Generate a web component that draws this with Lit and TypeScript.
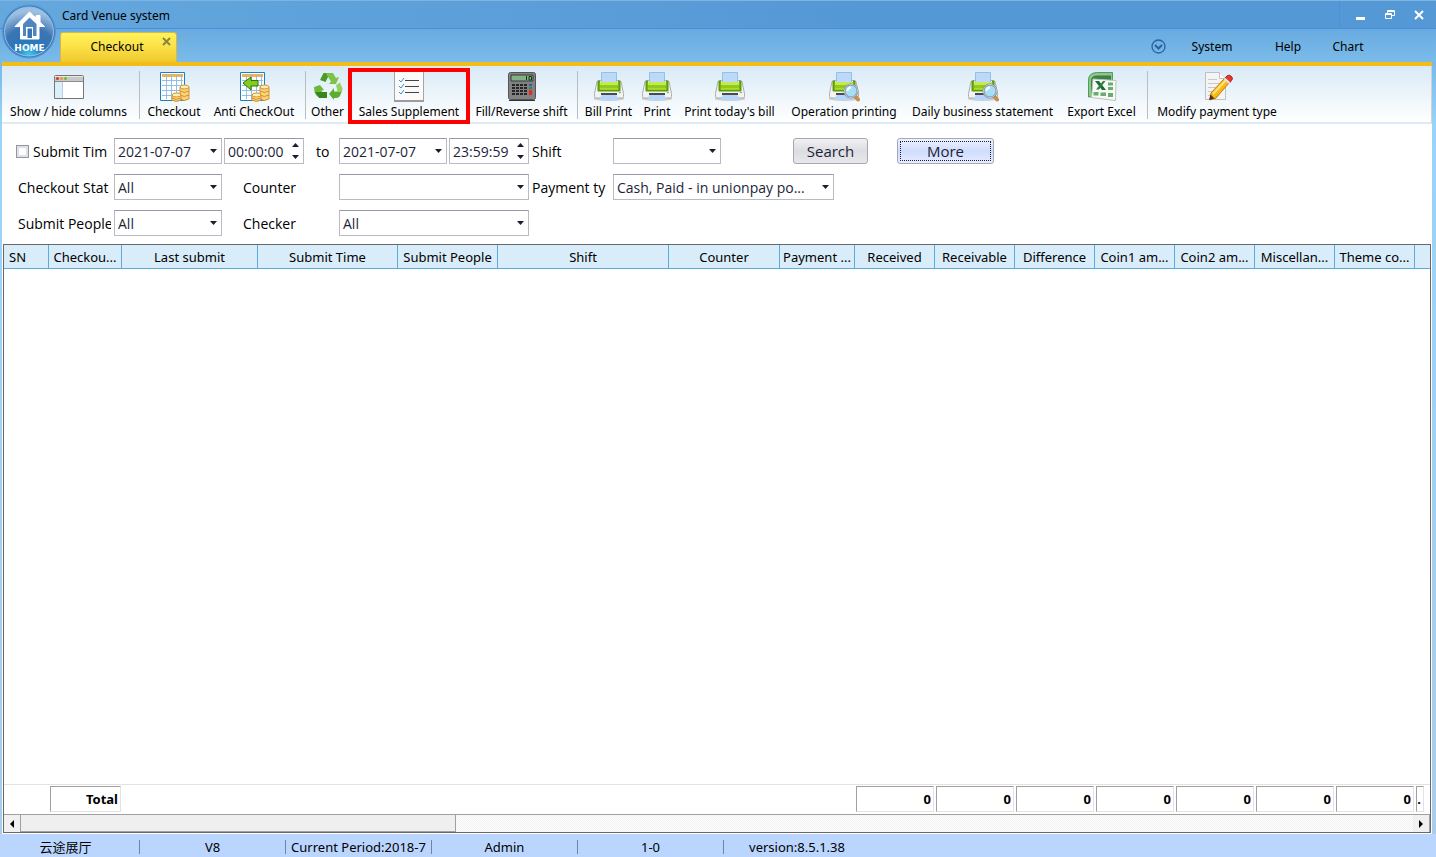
import { LitElement, html, css, svg } from "lit";
import { customElement } from "lit/decorators.js";

const printer = svg`
  <path d="M1 27.500q15 3 30 0" stroke="#cfcfcf" stroke-width="2" fill="none"/>
  <path d="M4 10.500q1-1 3-1h18q2 0 3 1l2.500 12v3q0 1.500-1.500 1.500H3q-1.500 0-1.500-1.500v-3z" fill="#f3f3f3" stroke="#adadad"/>
  <path d="M8.500 1.500h15v10h-15z" fill="#bcdaf8" stroke="#93bfec"/>
  <path d="M4.500 10.500q0-1 1-1h1.500v8h18v-8h1.500q1 0 1 1v9q0 1-1 1h-21q-1 0-1-1z" fill="#5d9c0c"/>
  <path d="M6.500 11h19v8h-19z" fill="#8fca1d"/>
  <path d="M7 11h18v3H7z" fill="#c5ea4e"/>
  <path d="M7 17h18v1.500H7z" fill="#a8dc2f"/>
  <path d="M8 22h16v2H8z" fill="#4b4b4b"/>
  <path d="M8.500 24h15l2 5h-19z" fill="#b5d6fa"/>
  <circle cx="27" cy="21.500" r=".8" fill="#4aa02a"/>`;

const lens = svg`
  <path d="M27 25l3 3.500" stroke="#c98f48" stroke-width="4" stroke-linecap="round"/>
  <circle cx="23" cy="20" r="6.500" fill="#a5def9" stroke="#7d868e" stroke-width="2"/>
  <circle cx="23" cy="20" r="6.500" fill="none" stroke="#d7dde2" stroke-width=".8"/>
  <path d="M19.500 20q0-3.500 3.500-3.500" stroke="#fff" stroke-width="2" fill="none"/>`;

const sheet = svg`
  <path d="M2.500 1.500h24v28h-24z" fill="#fff" stroke="#1f7fc0"/>
  <path d="M4 3h21v3H4z" fill="#f7b04c"/>
  <path d="M4 9.500h21M4 14.500h21M4 19.500h21M4 24.500h21M8.500 3v25M13.500 3v25M18.500 3v25M23.500 3v25" stroke="#8fbfe2"/>`;

const coins = svg`
  <path d="M22 16v12q4 3 9 0V16z" fill="#fbd274" stroke="#d09335"/>
  <ellipse cx="26.500" cy="16" rx="4.500" ry="2" fill="#ffedb5" stroke="#d09335"/>
  <path d="M22 20q4 3 9 0M22 24q4 3 9 0" fill="none" stroke="#d09335"/>
  <path d="M14 24v5q4 3 9 0v-5z" fill="#fbd274" stroke="#d09335"/>
  <ellipse cx="18.500" cy="24" rx="4.500" ry="2" fill="#ffedb5" stroke="#d09335"/>
  <path d="M14 27q4 3 9 0" fill="none" stroke="#d09335"/>`;

const icons: Record<string, unknown> = {
  columns: svg`
    <path d="M1.500 5.500q0-1 1-1h27q1 0 1 1v22h-29z" fill="#fff" stroke="#777"/>
    <path d="M2 5h28v5H2z" fill="#c8c8c8"/><path d="M2 5.500h28" stroke="#e6e6e6"/><path d="M2 10.500h28" stroke="#8c8c8c"/>
    <path d="M2 11h7v16H2z" fill="#d9effc"/><path d="M9.500 11v16" stroke="#b9cfdd"/>
    <circle cx="4.500" cy="7.500" r="1.500" fill="#d8303a"/><circle cx="8.500" cy="7.500" r="1.500" fill="#ee9a28"/><circle cx="12.500" cy="7.500" r="1.500" fill="#79b82a"/>`,
  checkout: svg`${sheet}${coins}`,
  anti: svg`${sheet}<path d="M5 12l8-6v3.500h7v5.500h-7v4z" fill="#86c91f" stroke="#2f7707"/>${coins}`,
  recycle: svg`
    <path d="M8 9l3.500-7H20l-3.500 3-3 6z" fill="#4c9a2b"/><path d="M14 2h7l3 5 3-1-3 7h-7l2-2.500-4-6z" fill="#7fc248"/>
    <path d="M2 16l6-2 4 5-2.500.5 3 6.500H8q-4 0-5.500-5z" fill="#6fb93a"/><path d="M3 21l4 6h8v-6H8z" fill="#37871f"/>
    <path d="M17 23l5-6v3.500h6l2-1-2 5.500q-1 2-4 2h-2v2z" fill="#5cae30"/><path d="M24 14l4-2.500 2.500 6q.5 2-2 3.500l-3-.5z" fill="#92d25e"/>`,
  supplement: svg`
    <path d="M1.500 .5h29v29h-29z" fill="#fafafa" stroke="#a5a5a5"/><path d="M1 30h30" stroke="#9c9c9c" stroke-width="2"/>
    <path d="M12 9.500h14M12 15.500h14M12 21.500h14" stroke="#444"/>
    <path d="M6 9l2 2 3-4M6 15l2 2 3-4M6 21l2 2 3-4" fill="none" stroke="#3b92d4"/>`,
  calculator: svg`
    <rect x="2.500" y="1.500" width="27" height="27" rx="2" fill="#828282" stroke="#555"/>
    <path d="M5 4h22v6H5z" fill="#82b188" stroke="#3b3b3b"/><path d="M20.500 5v4M23 5.500h2.500v3.500H23z" stroke="#173519" fill="none"/>
    <path d="M6 14h15M6 17h15M6 20h15M6 23h15" stroke="#262626" stroke-width="2" stroke-dasharray="3 1"/>
    <path d="M23 13h3v2h-3z" fill="#3b50c4"/><path d="M23 16h3v2h-3z" fill="#2f8b31"/><path d="M23 19h3v5h-3z" fill="#df2b24"/>
    <path d="M3 29.500h26" stroke="#333"/>`,
  printer,
  search: svg`${printer}${lens}`,
  excel: svg`
    <path d="M2.500 26V9q0-7 8-7.500h16V24z" fill="#8ec78d" stroke="#4f9d57"/>
    <path d="M5 24V10q0-5.500 6-5.500h14V10H9v14z" fill="#3f8049"/>
    <path d="M7 8l23 1.500L29.500 29.500 5.500 26.500z" fill="#f8faf5" stroke="#b9c7b5"/>
    <path d="M9 10h4l7 9h-4z" fill="#1f6b36"/><path d="M17 10h2.500L13 18.500h-3z" fill="#2f7f45"/>
    <path d="M22 11.500h5v3h-5zM22 16h5v3h-5zM7.500 21h5v3.500h-5zM14.500 21.500h5.500v3.500h-5.500zM22 22h5v4h-5z" fill="#69ab70"/>`,
  pencil: svg`
    <path d="M4.500 1.500h14l6 6v21h-20z" fill="#f4f4f4" stroke="#c0c0c0"/><path d="M18.500 1.500v6h6" fill="#fff" stroke="#c0c0c0"/>
    <path d="M7 8.500h9M7 12.500h13M7 16.500h10M7 20.500h6M7 24.500h4" stroke="#c9c9c9"/>
    <path d="M10 22L23 8l5 4-13 15-6 2z" fill="#f8ba16" stroke="#c07c10"/><path d="M12 23L24.500 9.500" stroke="#ffe27a" stroke-width="2"/>
    <path d="M24 7l2.500-2.500q2-1 4 1t0 4L28.500 12z" fill="#e23a2e" stroke="#b01f18"/><path d="M23.500 7.500l5 4.500" stroke="#e9e9e9" stroke-width="2"/>
    <path d="M9.500 23.500l4 4-5.500 1.500z" fill="#55301a"/>`,
};

interface Tool { label: string; icon: string; width: number; marked?: boolean }

const toolGroups: Tool[][] = [
  [{ label: "Show / hide columns", icon: "columns", width: 133 }],
  [
    { label: "Checkout", icon: "checkout", width: 66 },
    { label: "Anti CheckOut", icon: "anti", width: 94 },
  ],
  [
    { label: "Other", icon: "recycle", width: 41 },
    { label: "Sales Supplement", icon: "supplement", width: 122, marked: true },
    { label: "Fill/Reverse shift", icon: "calculator", width: 103 },
  ],
  [
    { label: "Bill Print", icon: "printer", width: 59 },
    { label: "Print", icon: "printer", width: 38 },
    { label: "Print today's bill", icon: "printer", width: 107 },
    { label: "Operation printing", icon: "search", width: 122 },
    { label: "Daily business statement", icon: "search", width: 155 },
    { label: "Export Excel", icon: "excel", width: 83 },
  ],
  [{ label: "Modify payment type", icon: "pencil", width: 136 }],
];

const columns: { label: string; width?: number; total?: string }[] = [
  { label: "SN", width: 45 },
  { label: "Checkou...", width: 73, total: "Total" },
  { label: "Last submit", width: 136 },
  { label: "Submit Time", width: 140 },
  { label: "Submit People", width: 100 },
  { label: "Shift", width: 171 },
  { label: "Counter", width: 111 },
  { label: "Payment ...", width: 75 },
  { label: "Received", width: 80, total: "0" },
  { label: "Receivable", width: 80, total: "0" },
  { label: "Difference", width: 80, total: "0" },
  { label: "Coin1 am...", width: 80, total: "0" },
  { label: "Coin2 am...", width: 80, total: "0" },
  { label: "Miscellan...", width: 80, total: "0" },
  { label: "Theme co...", width: 80, total: "0" },
  { label: "", total: "." },
];

@customElement("app-root")
export class AppRoot extends LitElement {
  static styles = css`
    :host {
      display: flex;
      flex-direction: column;
      height: 100vh;
      box-sizing: border-box;
      overflow: hidden;
      position: relative;
      background: linear-gradient(#5a9ad8 0, #5a9ad8 28px, #78b8e8 62px, #9bd3f8 124px, #a9cdec 100%);
      font-family: "Noto Sans", "Noto Sans CJK SC", sans-serif;
      font-size: 13px;
      color: #000;
    }
    * { box-sizing: border-box; }
    button, input, select { font: inherit; color: inherit; margin: 0; padding: 0; border: 0; background: none; border-radius: 0; }
    .titlebar {
      display: flex; height: 29px; align-items: center; padding-left: 62px; flex: none; font-size: 12px;
      border-top: 1px solid #7db4e2; border-bottom: 1px solid #4590dc;
      background: linear-gradient(90deg, #64a8de, #5598d6 60%);
    }
    .title { flex: 1; font-weight: 400; font-size: 12px; margin: 0; padding-top: 2px; }
    .window-buttons { display: flex; height: 28px; padding: 0 3px 0 6px; border-left: 1px solid #4a90da; }
    .window-buttons button { width: 29px; display: grid; place-items: center; }
    .tabs {
      display: flex; height: 33px; flex: none; align-items: flex-end; padding-left: 60px; padding-right: 58px; font-size: 12px;
      background: linear-gradient(#69abe0, #7bbbea);
    }
    .tab {
      display: flex; width: 117px; height: 30px; border-radius: 3px 3px 0 0; border: 1px solid #d3b74a; border-bottom: 0;
      background: linear-gradient(#fff35a, #fbe248 45%, #efc92e); position: relative;
    }
    .tab-label { width: 112px; text-align: center; font-size: 12px; padding-bottom: 2px; }
    .tab-close { position: absolute; top: 3px; right: 4px; display: grid; place-items: center; width: 12px; height: 11px; }
    .menu { display: flex; flex: 1; align-items: center; justify-content: flex-end; height: 32px; }
    .menu button { display: grid; padding-top: 1px; }
    .menu a { color: #000; text-decoration: none; width: 60px; text-align: center; }
    .menu a.first { width: 92px; }
    .home { position: absolute; left: 1px; top: 4px; width: 56px; height: 56px; }
    .home svg { display: block; }
    .frame { display: flex; flex-direction: column; flex: 1; min-height: 0; margin: 0 4px 0 2px; background: #fff; border-top: 4px solid #f2bd16; }
    .toolbar {
      display: flex; flex: none; height: 58px; border-bottom: 2px solid #deebf6; background: linear-gradient(#d9eaf6, #fff);
      border-right: 1px solid #cdd3d8; font-size: 12px;
    }
    .group { display: flex; padding-right: 4px; }
    .group + .group { border-left: 1px solid #b9bec3; padding-left: 1px; margin: 5px 0 3px; }
    .group + .group .tool { margin-top: -5px; }
    .tool { display: flex; flex-direction: column; align-items: center; height: 58px; padding-top: 5px; white-space: nowrap; line-height: 18px; }
    .tool svg { display: block; flex: none; }
    .group .tool.marked { outline: 4px solid #f00; outline-offset: -4px; margin-top: -3px; padding-top: 3px; height: 56px; }
    .filters { display: flex; flex-direction: column; gap: 10px; padding: 14px 0 8px 14px; font-family: "Open Sans", "Noto Sans", sans-serif; font-size: 15px; flex: none; }
    .row { display: flex; align-items: center; height: 26px; }
    .label { flex: none; display: flex; align-items: center; white-space: nowrap; overflow: hidden; height: 24px; font-size: 14px; }
    .l-first { width: 95px; margin-right: 3px; padding-left: 2px; }
    .l-first.tick { padding-left: 0; width: 95px; margin-right: 3px; gap: 4px; }
    .l-mid { width: 117px; padding-left: 21px; }
    .l-to { width: 35px; padding-left: 12px; }
    .l-third { width: 78px; padding-left: 3px; margin-right: 6px; }
    .check { appearance: none; flex: none; width: 13px; height: 13px; border: 1px solid #9496a3; background: #fff; box-shadow: inset 0 0 0 2px #dfe1e8; }
    .combo {
      appearance: none; flex: none; height: 26px; width: 108px; border: 1px solid #b9bac4; border-top-color: #9899a8; padding: 0 16px 0 3px; color: #1e1e39;
      background: #fff url('data:image/svg+xml,<svg xmlns="http://www.w3.org/2000/svg" width="7" height="4"><path d="M0 0h7L3.500 4z" fill="%231c1c30"/></svg>') no-repeat right 4px center;
      white-space: nowrap; font-size: 14px;
    }
    .combo.wide { width: 190px; }
    .combo.pay { width: 221px; }
    .spin { display: flex; width: 80px; height: 26px; margin-left: 2px; border: 1px solid #b9bac4; border-top-color: #9899a8; color: #1e1e39; font-size: 14px; }
    .spin input { flex: 1; min-width: 0; padding-left: 3px; }
    .arrows { display: flex; flex-direction: column; width: 16px; }
    .arrows button { flex: 1; display: grid; place-items: center; }
    .btn {
      width: 75px; height: 26px; margin-left: 72px; border: 1px solid #a5a7b3; border-radius: 3px; color: #1e1e39; padding-bottom: 1px;
      background: linear-gradient(#f1f1f3, #dcdde1 50%, #e8e8ec);
    }
    .btn.more { width: 97px; margin-left: 29px; background: linear-gradient(#eef2ff, #cfdcfc 50%, #e6edff); outline: 1px dotted #1e1e39; outline-offset: -4px; }
    .grid { display: flex; flex-direction: column; flex: 1; min-height: 0; margin: 0 1px 1px; border: 1px solid #696969; }
    .body { flex: 1; min-height: 0; }
    table { width: 100%; height: 100%; table-layout: fixed; border-collapse: separate; border-spacing: 0; }
    th {
      height: 24px; padding: 0 2px; font-weight: 400; font-size: 13px; line-height: 20px; background: #d9ecf9; white-space: nowrap; overflow: hidden;
      border-right: 1px solid #5cabda; border-bottom: 1px solid #5cabda;
    }
    th:first-child { text-align: left; padding-left: 5px; }
    th:last-child { border-right: 0; }
    tbody td { padding: 0; }
    tfoot td { height: 30px; border-top: 1px solid #e3e3e3; padding: 1px 1px 2px; vertical-align: top; }
    tfoot td:last-child { padding-right: 6px; }
    .total {
      height: 26px; font-weight: 700; font-size: 13px; line-height: 24px; text-align: right; padding-right: 2px; overflow: hidden;
      border: 1px solid #a0a0a0; border-right: 1px solid #e3e3e3; border-bottom: 1px solid #e3e3e3;
    }
    .scroll {
      display: flex; flex: none; height: 18px; border-top: 1px solid #a0a0a0;
      background: repeating-conic-gradient(#f0f0f0 0 25%, #fff 0 50%) 0 0 / 2px 2px;
    }
    .scroll button { width: 17px; display: grid; place-items: center; background: #f0f0f0; border-right: 1px solid #a0a0a0; }
    .thumb { width: 30.5%; background: #efefef; border-right: 1px solid #a0a0a0; border-bottom: 1px solid #a0a0a0; }
    .space { flex: 1; }
    .status { display: flex; flex: none; align-items: center; height: 23px; background: #bad6ff; font-size: 13px; padding-top: 2px; }
    .status span { width: 146px; text-align: center; border-right: 1px solid #7384a3; line-height: 14px; white-space: nowrap; }
    .status span:first-child { width: 140px; padding-right: 8px; }
    .status span:last-child { border: 0; }
  `;

  private combo(label: string, value: string, kind = "") {
    return html`<select class="combo ${kind}" aria-label=${label}><option>${value}</option></select>`;
  }

  private spinner(label: string, value: string) {
    return html`<div class="spin">
      <input type="text" aria-label=${label} .value=${value} />
      <div class="arrows">
        <button aria-label="Increase"><svg width="7" height="4"><path d="M0 4h7L3.500 0z" fill="#1c1c30" /></svg></button>
        <button aria-label="Decrease"><svg width="7" height="4"><path d="M0 0h7L3.500 4z" fill="#1c1c30" /></svg></button>
      </div>
    </div>`;
  }

  render() {
    return html`
      <header class="titlebar">
        <h1 class="title">Card Venue system</h1>
        <div class="window-buttons">
          <button aria-label="Minimize"><svg width="10" height="10"><path d="M0 7h9v3H0z" fill="#fff" /></svg></button>
          <button aria-label="Restore"><svg width="10" height="10" fill="none" stroke="#fff"><path d="M2.500 3V.5h7v5H7M2 1.500h8M.5 3.500h6v5h-6zM0 4.500h7" /></svg></button>
          <button aria-label="Close window"><svg width="10" height="10"><path d="M1 1l8 8M9 1L1 9" stroke="#fff" stroke-width="2" /></svg></button>
        </div>
      </header>
      <nav class="tabs">
        <div class="tab">
          <button class="tab-label">Checkout</button>
          <button class="tab-close" aria-label="Close tab"><svg width="9" height="9"><path d="M1 1l7 7M8 1L1 8" stroke="#8d8340" stroke-width="2" /></svg></button>
        </div>
        <div class="menu">
          <button aria-label="Options"><svg width="15" height="15" fill="none" stroke="#29619f"><circle cx="7.500" cy="7.500" r="6.500" stroke-width="1.300" /><path d="M4 6l3.500 3.500L11 6" stroke-width="2" /></svg></button>
          <a href="#system" class="first">System</a>
          <a href="#help">Help</a>
          <a href="#chart">Chart</a>
        </div>
      </nav>
      <button class="home" aria-label="Home">
        <svg width="56" height="56" viewBox="0 0 56 56">
          <defs>
            <radialGradient id="orb" cx=".5" cy="1" r=".9"><stop offset="0" stop-color="#3fd0f4" /><stop offset=".3" stop-color="#2879bb" /><stop offset=".65" stop-color="#3c74b3" /><stop offset="1" stop-color="#9dc0e2" /></radialGradient>
          </defs>
          <circle cx="28" cy="27.500" r="26.500" fill="#3f7fbd" stroke="#5c97cf" />
          <circle cx="28" cy="27.500" r="24.500" fill="url(#orb)" stroke="#8fc1e8" />
          <path d="M28.500 8L14 22.500h5.500V35H38V22.500h5.500L39 18v-6.500h-4V14z" fill="#fff" stroke="#fff" stroke-linejoin="round" />
          <path d="M28.500 13.500L22 20v12h3v-9h7v9h3.500V20z" fill="#4f86bf" />
          <path d="M26.500 24.500h4.500V34h-4.500z" fill="#3c74b3" />
          <text x="28.500" y="46.500" text-anchor="middle" font-size="9" font-weight="700" fill="#fff" font-family="DejaVu Sans, sans-serif">HOME</text>
        </svg>
      </button>
      <main class="frame">
        <div class="toolbar">
          ${toolGroups.map((group) => html`<div class="group">
            ${group.map((t) => html`<button class="tool ${t.marked ? "marked" : ""}" style="width:${t.width}px">
              <svg width="32" height="32" viewBox="0 0 32 32">${icons[t.icon]}</svg>${t.label}
            </button>`)}
          </div>`)}
        </div>
        <div class="filters">
          <div class="row">
            <label class="label l-first tick"><input class="check" type="checkbox" />Submit Tim</label>
            ${this.combo("Start date", "2021-07-07")}${this.spinner("Start time", "00:00:00")}
            <span class="label l-to">to</span>
            ${this.combo("End date", "2021-07-07")}${this.spinner("End time", "23:59:59")}
            <span class="label l-third">Shift</span>${this.combo("Shift", "")}
            <button class="btn">Search</button><button class="btn more">More</button>
          </div>
          <div class="row">
            <span class="label l-first">Checkout Stat</span>${this.combo("Checkout State", "All")}
            <span class="label l-mid">Counter</span>${this.combo("Counter", "", "wide")}
            <span class="label l-third">Payment ty</span>${this.combo("Payment type", "Cash, Paid - in unionpay po...", "pay")}
          </div>
          <div class="row">
            <span class="label l-first">Submit People</span>${this.combo("Submit People", "All")}
            <span class="label l-mid">Checker</span>${this.combo("Checker", "All", "wide")}
          </div>
        </div>
        <section class="grid">
          <div class="body">
            <table>
              <colgroup>${columns.map((c) => html`<col style=${c.width ? `width:${c.width}px` : ""} />`)}</colgroup>
              <thead><tr>${columns.map((c) => html`<th>${c.label}</th>`)}</tr></thead>
              <tbody><tr><td colspan="16"></td></tr></tbody>
              <tfoot><tr>${columns.map((c) => html`<td>${c.total ? html`<div class="total">${c.total}</div>` : ""}</td>`)}</tr></tfoot>
            </table>
          </div>
          <div class="scroll">
            <button aria-label="Scroll left"><svg width="4" height="8"><path d="M4 0v8L0 4z" /></svg></button>
            <div class="thumb"></div><div class="space"></div>
            <button aria-label="Scroll right"><svg width="4" height="8"><path d="M0 0v8l4-4z" /></svg></button>
          </div>
        </section>
      </main>
      <footer class="status">
        <span>云途展厅</span><span>V8</span><span>Current Period:2018-7</span><span>Admin</span><span>1-0</span><span>version:8.5.1.38</span>
      </footer>
    `;
  }
}
